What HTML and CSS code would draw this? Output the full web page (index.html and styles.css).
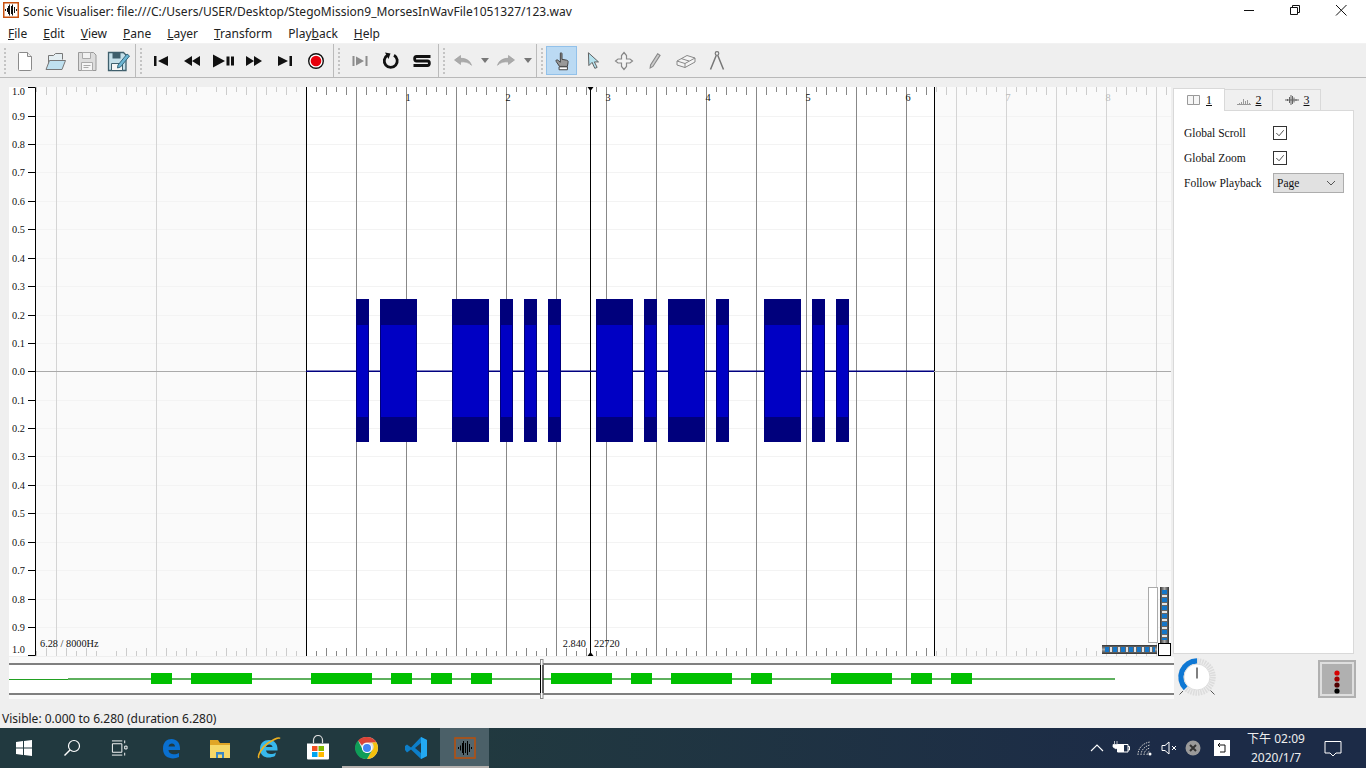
FILE: index.html
```html
<!DOCTYPE html>
<html lang="en">
<head>
  <meta charset="UTF-8">
  <title>Sonic Visualiser</title>
  <link rel="stylesheet" href="styles.css">
</head>
<body>
  <!-- title bar -->
  <div class="titlebar">
    <svg class="app-icon" width="16" height="16" viewBox="0 0 16 16"><rect x="0.75" y="0.75" width="14.5" height="14.5" fill="#fff" stroke="#c8500f" stroke-width="1.5"/><path d="M2.500 7v2M4.500 6v4M5.500 4v8M6.500 2.500v11M8.500 4v8M9.500 2.500v11M11.500 5v6M13.500 7v2" stroke="#111" fill="none"/></svg>
    <span class="title-text">Sonic Visualiser: file:///C:/Users/USER/Desktop/StegoMission9_MorsesInWavFile1051327/123.wav</span>
    <div class="window-controls">
      <svg width="46" height="22" viewBox="0 0 46 22"><path d="M18 10.500h10" stroke="#111"/></svg>
      <svg width="46" height="22" viewBox="0 0 46 22"><path d="M18.500 7.500h7v7h-7zM20.500 7.500v-2h7v7h-2" fill="none" stroke="#111"/></svg>
      <svg width="46" height="22" viewBox="0 0 46 22"><path d="M18 5l10.500 10.500M28.500 5L18 15.500" stroke="#111"/></svg>
    </div>
  </div>

  <!-- menu -->
  <div class="menubar">
    <span class="menu-item"><u>F</u>ile</span>
    <span class="menu-item"><u>E</u>dit</span>
    <span class="menu-item"><u>V</u>iew</span>
    <span class="menu-item"><u>P</u>ane</span>
    <span class="menu-item"><u>L</u>ayer</span>
    <span class="menu-item"><u>T</u>ransform</span>
    <span class="menu-item">Play<u>b</u>ack</span>
    <span class="menu-item"><u>H</u>elp</span>
  </div>

  <!-- toolbars -->
  <div class="toolbar">
    <div class="tool-group file-group">
      <span class="grip"></span>
      <span class="tool"><svg width="24" height="24" viewBox="0 0 24 24"><path d="M6.500 3.500h8l4 4v13a1 1 0 0 1-1 1h-11a1 1 0 0 1-1-1v-16a1 1 0 0 1 1-1z" fill="#fff" stroke="#8a8a8a"/><path d="M14.500 3.500v4h4" fill="#eee" stroke="#8a8a8a"/></svg></span>
      <span class="tool"><svg width="24" height="24" viewBox="0 0 24 24"><path d="M4.500 20V6.500h5l2-2h7v6" fill="#e4eef2" stroke="#777"/><path d="M2 20.500l3.500-9h16l-3.500 9z" fill="#bfe0ef" stroke="#777"/></svg></span>
      <span class="tool"><svg width="24" height="24" viewBox="0 0 24 24"><path d="M3.500 3.500h15l2.500 2.500v15.500h-17.500z" fill="#ddd" stroke="#999"/><path d="M7.500 3.500h8v6h-8z" fill="#f2f2f2" stroke="#aaa"/><path d="M6.500 13.500h11v8h-11z" fill="#f6f6f6" stroke="#aaa"/><path d="M8.500 16.500h7M8.500 18.500h5" stroke="#aaa"/></svg></span>
      <span class="tool"><svg width="24" height="24" viewBox="0 0 24 24"><path d="M2.500 3.500h15l2.500 2.500v15.500h-17.500z" fill="#c5e0ea" stroke="#3f5f6c" stroke-width="1.300"/><path d="M6.500 3.500h8v6h-8z" fill="#3f5f6c"/><path d="M5.500 14.500h11v7h-11z" fill="#f6f6f6" stroke="#3f5f6c"/><path d="M12 16l9-11 2.500 2-9 11-3 1z" fill="#6db6d4" stroke="#35677c"/></svg></span>
    </div>
    <div class="tool-group transport-group">
      <span class="grip"></span>
      <span class="tool"><svg width="24" height="24" viewBox="0 0 24 24"><path d="M5 7h2.500v10H5zM19 7v10l-10-5z" fill="#111"/></svg></span>
      <span class="tool"><svg width="24" height="24" viewBox="0 0 24 24"><path d="M12 7v10l-8-5zM20 7v10l-8-5z" fill="#111"/></svg></span>
      <span class="tool"><svg width="24" height="24" viewBox="0 0 24 24"><path d="M2 5.500v13l12-6.500zM15.500 7.500h3v9h-3zM20 7.500h3v9h-3z" fill="#111"/></svg></span>
      <span class="tool"><svg width="24" height="24" viewBox="0 0 24 24"><path d="M4 7v10l8-5zM12 7v10l8-5z" fill="#111"/></svg></span>
      <span class="tool"><svg width="24" height="24" viewBox="0 0 24 24"><path d="M5 7v10l10-5zM16.500 7H19v10h-2.500z" fill="#111"/></svg></span>
      <span class="tool"><svg width="24" height="24" viewBox="0 0 24 24"><circle cx="12" cy="12" r="7.300" fill="#fff" stroke="#111" stroke-width="1.400"/><circle cx="12" cy="12" r="5.300" fill="#e8000c"/></svg></span>
    </div>
    <div class="tool-group loop-group">
      <span class="grip"></span>
      <span class="tool"><svg width="24" height="24" viewBox="0 0 24 24"><path d="M4.500 7h2v10h-2zM17.500 7h2v10h-2zM8 7.500v9l8-4.500z" fill="#8c8c8c"/></svg></span>
      <span class="tool"><svg width="24" height="24" viewBox="0 0 24 24"><path d="M15 6.300a6.500 6.500 0 1 1-6.500 0" fill="none" stroke="#111" stroke-width="2.800"/><path d="M6 3.500l5.500 1-2 5.500z" fill="#111"/></svg></span>
      <span class="tool"><svg width="24" height="24" viewBox="0 0 24 24"><path d="M20.500 7.500H6.500c-2.500 0-2.500 4.500 0 4.500h11c2.500 0 2.500 4.500 0 4.500H3.500" fill="none" stroke="#111" stroke-width="2.800"/></svg></span>
    </div>
    <div class="tool-group history-group">
      <span class="grip"></span>
      <span class="tool tool-wide"><svg width="24" height="24" viewBox="0 0 24 24"><path d="M3.500 11l6-4.500v2.800c5 0 9 1.500 11 7-3-3-6.500-3.800-11-3.300v2.500z" fill="#aaa" stroke="#999" stroke-width="0.600"/></svg></span>
      <span class="tool tool-arrow"><svg width="10" height="6" viewBox="0 0 10 6"><path d="M1 0h8l-4 5z" fill="#777"/></svg></span>
      <span class="tool tool-wide"><svg width="24" height="24" viewBox="0 0 24 24"><path d="M20.500 11l-6-4.500v2.800c-5 0-9 1.500-11 7 3-3 6.500-3.800 11-3.300v2.500z" fill="#aaa" stroke="#999" stroke-width="0.600"/></svg></span>
      <span class="tool tool-arrow"><svg width="10" height="6" viewBox="0 0 10 6"><path d="M1 0h8l-4 5z" fill="#777"/></svg></span>
    </div>
    <div class="tool-group mode-group">
      <span class="grip"></span>
      <span class="tool tool-active"><svg width="20" height="20" viewBox="0 0 24 24"><path d="M10 2.500c1-.800 2-.300 2 1V10l5.500 1c1.500.300 2 1 1.800 2.500l-.8 5H9l-4-6c-.800-1.500.8-2.500 2-1.500l3 2.500z" fill="#999" stroke="#444" stroke-width="1.200"/><path d="M8.500 19h10v3.500h-10z" fill="#fff" stroke="#444" stroke-width="1.200"/></svg></span>
      <span class="tool"><svg width="22" height="22" viewBox="0 0 24 24"><path d="M7 3l.500 14 3.500-3.500 3 6.500 2.500-1-3-6h4.500z" fill="#b5e2ee" stroke="#555"/></svg></span>
      <span class="tool"><svg width="24" height="24" viewBox="0 0 24 24"><path d="M12 3.500l2.500 3v3.500h3.500l2.500 2-2.500 2H14.500v3.500l-2.500 3-2.500-3V14H6l-2.500-2L6 10h3.500V6.500z" fill="#f3f3f3" stroke="#888" stroke-width="1.200"/></svg></span>
      <span class="tool"><svg width="19" height="19" viewBox="0 0 24 24"><path d="M16 3.500l3 2-9 14-3.500 2 .500-4z" fill="#ccc" stroke="#888" stroke-width="1.400"/></svg></span>
      <span class="tool"><svg width="24" height="24" viewBox="0 0 24 24"><path d="M3 12l10-5.500 8 2.500v4l-10 5.500-8-2.500z" fill="#f4f4f4" stroke="#888"/><path d="M3 12l8 2.500 10-5.500M11 14.500v4M7 9.500l8 2.500" fill="none" stroke="#888"/></svg></span>
      <span class="tool"><svg width="24" height="24" viewBox="0 0 24 24"><circle cx="12" cy="4.500" r="1.800" fill="none" stroke="#777" stroke-width="1.200"/><path d="M11.200 6.500L5.500 20.500M12.800 6.500l5.700 14" stroke="#777" stroke-width="1.500"/></svg></span>
    </div>
  </div>

  <!-- main area: pane and property box -->
  <div class="main-row">
    <svg class="pane" width="1162" height="569" viewBox="9 87 1162 569">
      <defs>
        <pattern id="ticks-in" patternUnits="userSpaceOnUse" x="306" y="87" width="100" height="8"><path d="M10.500 0v5M20.500 0v8M30.500 0v5M40.500 0v8M60.500 0v8M70.500 0v5M80.500 0v8M90.500 0v5" stroke="#888"/></pattern>
        <pattern id="ticks-out" patternUnits="userSpaceOnUse" x="306" y="87" width="100" height="8"><path d="M10.500 0v5M20.500 0v8M30.500 0v5M40.500 0v8M60.500 0v8M70.500 0v5M80.500 0v8M90.500 0v5" stroke="#ccc"/></pattern>
        <g id="ruler-ticks">
          <rect x="36" y="87" width="270" height="8" fill="url(#ticks-out)"/>
          <rect x="306" y="87" width="628" height="8" fill="url(#ticks-in)"/>
          <rect x="934" y="87" width="237" height="8" fill="url(#ticks-out)"/>
        </g>
        <pattern id="wheel-v" patternUnits="userSpaceOnUse" x="1160" y="590" width="9" height="8"><rect x="2" y="0" width="5" height="4" fill="#1576c8"/><rect x="2" y="4" width="5" height="1" fill="#666"/><rect x="2" y="5" width="5" height="2" fill="#e4e4e4"/><rect x="2" y="7" width="5" height="1" fill="#666"/></pattern>
        <pattern id="wheel-h" patternUnits="userSpaceOnUse" x="1105" y="645" width="8" height="9"><rect x="0" y="2" width="4" height="5" fill="#1576c8"/><rect x="4" y="2" width="1" height="5" fill="#666"/><rect x="5" y="2" width="2" height="5" fill="#e4e4e4"/><rect x="7" y="2" width="1" height="5" fill="#666"/></pattern>
        <linearGradient id="wheel-edge-v"><stop offset="0" stop-color="#333"/><stop offset="0.500" stop-color="#aaa"/><stop offset="1" stop-color="#333"/></linearGradient>
        <linearGradient id="wheel-edge-h" x2="0" y2="1"><stop offset="0" stop-color="#333"/><stop offset="0.500" stop-color="#aaa"/><stop offset="1" stop-color="#333"/></linearGradient>
      </defs>

      <rect x="9" y="87" width="27" height="569" fill="#fff"/>
      <rect x="36" y="87" width="1135" height="569" fill="#fafafa"/>
      <rect x="306" y="87" width="628" height="569" fill="#fff"/>

      <!-- grid -->
      <path d="M36 116.500H1171M36 144.500H1171M36 172.500H1171M36 201.500H1171M36 229.500H1171M36 258.500H1171M36 286.500H1171M36 315.500H1171M36 343.500H1171M36 400.500H1171M36 428.500H1171M36 456.500H1171M36 485.500H1171M36 513.500H1171M36 542.500H1171M36 570.500H1171M36 599.500H1171M36 627.500H1171" stroke="#f3f3f3" fill="none"/>
      <path d="M56.500 87V656M156.500 87V656M256.500 87V656M956.500 87V656M1006.500 87V656M1056.500 87V656M1106.500 87V656M1156.500 87V656" stroke="#d4d4d4" fill="none"/>
      <path d="M356.500 87V656M406.500 87V656M456.500 87V656M506.500 87V656M556.500 87V656M606.500 87V656M656.500 87V656M706.500 87V656M756.500 87V656M806.500 87V656M856.500 87V656M906.500 87V656" stroke="#888" fill="none"/>
      <path d="M306.500 87V656M934.500 87V656M590.500 87V656" stroke="#000" fill="none"/>
      <path d="M36 371.500H306M934 371.500H1171" stroke="#aaa" fill="none"/>
      <use href="#ruler-ticks"/>
      <use href="#ruler-ticks" transform="matrix(1 0 0 -1 0 743)"/>
      <path d="M587.500 87h6l-3 4zM587.500 656h6l-3-4z" fill="#000"/>

      <!-- vertical scale -->
      <path d="M28 87.500h7.500V655.500H28M28 116.500h7M28 144.500h7M28 172.500h7M28 201.500h7M28 229.500h7M28 258.500h7M28 286.500h7M28 315.500h7M28 343.500h7M28 371.500h7M28 400.500h7M28 428.500h7M28 456.500h7M28 485.500h7M28 513.500h7M28 542.500h7M28 570.500h7M28 599.500h7M28 627.500h7" stroke="#000" fill="none"/>
      <g class="scale-text">
        <text x="12" y="95">1.0</text><text x="12" y="120">0.9</text><text x="12" y="148">0.8</text><text x="12" y="176">0.7</text><text x="12" y="205">0.6</text><text x="12" y="233">0.5</text><text x="12" y="262">0.4</text><text x="12" y="290">0.3</text><text x="12" y="319">0.2</text><text x="12" y="347">0.1</text><text x="12" y="375">0.0</text><text x="12" y="404">0.1</text><text x="12" y="432">0.2</text><text x="12" y="460">0.3</text><text x="12" y="489">0.4</text><text x="12" y="517">0.5</text><text x="12" y="546">0.6</text><text x="12" y="574">0.7</text><text x="12" y="603">0.8</text><text x="12" y="631">0.9</text><text x="12" y="653">1.0</text>
      </g>

      <!-- ruler labels -->
      <g class="scale-text">
        <text x="405.500" y="101">1</text><text x="505.500" y="101">2</text><text x="605.500" y="101">3</text><text x="705.500" y="101">4</text><text x="805.500" y="101">5</text><text x="905.500" y="101">6</text>
      </g>
      <g class="scale-text scale-faint"><text x="1005.500" y="101">7</text><text x="1105.500" y="101">8</text></g>

      <!-- waveform -->
      <rect x="306" y="370.500" width="628" height="1.500" fill="#000080"/>
      <path d="M356 299h13v143h-13zM380 299h37v143h-37zM452 299h37v143h-37zM500 299h13v143h-13zM524 299h13v143h-13zM548 299h13v143h-13zM596 299h37v143h-37zM644 299h13v143h-13zM668 299h37v143h-37zM716 299h13v143h-13zM764 299h37v143h-37zM812 299h13v143h-13zM836 299h13v143h-13z" fill="#00007c"/>
      <path d="M357 325h11v92h-11zM381 325h35v92h-35zM453 325h35v92h-35zM501 325h11v92h-11zM525 325h11v92h-11zM549 325h11v92h-11zM597 325h35v92h-35zM645 325h11v92h-11zM669 325h35v92h-35zM717 325h11v92h-11zM765 325h35v92h-35zM813 325h11v92h-11zM837 325h11v92h-11z" fill="#0000c4"/>

      <g class="scale-text">
        <text x="40" y="647">6.28 / 8000Hz</text>
        <text x="586" y="647" text-anchor="end">2.840</text>
        <text x="594" y="647">22720</text>
      </g>

      <!-- zoom thumbwheels -->
      <rect x="1148.500" y="587.500" width="9" height="55" fill="#fff" stroke="#aaa"/>
      <rect x="1160" y="587" width="9" height="56" fill="url(#wheel-edge-v)"/>
      <rect x="1160" y="590" width="9" height="50" fill="url(#wheel-v)"/>
      <rect x="1102" y="645" width="55" height="9" fill="url(#wheel-edge-h)"/>
      <rect x="1105" y="645" width="50" height="9" fill="url(#wheel-h)"/>
      <rect x="1158.500" y="643.500" width="12" height="12" fill="#fff" stroke="#000"/>
    </svg>

    <div class="property-box">
      <div class="tabs">
        <div class="tab tab-current"><svg width="16" height="12" viewBox="0 0 16 12"><path d="M1.500 1.500h6v9h-6zM7.500 1.500h6v9h-6z" fill="#f6f6f6" stroke="#999"/></svg><u>1</u></div>
        <div class="tab"><svg width="16" height="12" viewBox="0 0 16 12"><path d="M1 10.500h14M3.500 10V9M5.500 10V8M7.500 10V5M9.500 10V7M11.500 10V6M13.500 10V9" stroke="#999" fill="none"/></svg><u>2</u></div>
        <div class="tab"><svg width="16" height="12" viewBox="0 0 16 12"><path d="M1 6h14M3.500 5v2M5.500 3v6M7 1v10M8.500 2v8M10 3.500v5M12 5v2" stroke="#666" fill="none"/></svg><u>3</u></div>
      </div>
      <div class="tab-body">
        <div class="prop-label">Global Scroll</div>
        <div class="checkbox"><svg width="12" height="12" viewBox="0 0 13 13"><path d="M2.500 6.500l3 3 5-6" fill="none" stroke="#444"/></svg></div>
        <div class="prop-label">Global Zoom</div>
        <div class="checkbox"><svg width="12" height="12" viewBox="0 0 13 13"><path d="M2.500 6.500l3 3 5-6" fill="none" stroke="#444"/></svg></div>
        <div class="prop-label">Follow Playback</div>
        <div class="combo"><span>Page</span><svg width="10" height="6" viewBox="0 0 10 6"><path d="M1 1l4 4 4-4" fill="none" stroke="#555"/></svg></div>
      </div>
    </div>
  </div>

  <!-- overview, dial, level button -->
  <div class="overview-row">
    <svg class="overview" width="1165" height="42" viewBox="9 657 1165 42">
      <rect x="9" y="657" width="1165" height="42" fill="#fafafa"/>
      <rect x="9" y="665" width="1165" height="28" fill="#fff"/>
      <path d="M9 664h1165M9 694h1165" stroke="#808080" stroke-width="2"/>
      <path d="M9 679.500h59" stroke="#22a022"/>
      <path d="M68 679h1047" stroke="#5eb05e" stroke-width="2"/>
      <path d="M151 673h21v11h-21zM191 673h61v11h-61zM311 673h61v11h-61zM391 673h21v11h-21zM431 673h21v11h-21zM471 673h21v11h-21zM551 673h61v11h-61zM631 673h21v11h-21zM671 673h61v11h-61zM751 673h21v11h-21zM831 673h61v11h-61zM911 673h21v11h-21zM951 673h21v11h-21z" fill="#00c000"/>
      <rect x="540.500" y="659.500" width="2.500" height="39" fill="#fff" stroke="#888"/>
      <path d="M540.500 665v28M543 665v28" stroke="#000"/>
    </svg>
    <svg class="dial" width="44" height="42" viewBox="1175 657 44 42">
      <circle cx="1197" cy="677" r="16" fill="none" stroke="#dcdcdc" stroke-width="5.500" stroke-dasharray="1.500 1"/>
      <path d="M1197 661a16 16 0 0 0-11.300 27.300" fill="none" stroke="#0f78d4" stroke-width="5.500"/>
      <circle cx="1197" cy="677" r="13" fill="#fff" stroke="#ddd"/>
      <path d="M1197 667.500v11" stroke="#808080" stroke-width="2"/>
      <path d="M1183 691l-3.500 3.500M1210.500 690.500l4 4" stroke="#555"/>
    </svg>
    <div class="level-button">
      <svg width="30" height="30" viewBox="0 0 30 30"><rect width="30" height="30" fill="#b0b0b0"/><circle cx="15" cy="9" r="2.600" fill="#d80000"/><circle cx="15" cy="15" r="2.600" fill="#a00000"/><circle cx="15" cy="21" r="2.600" fill="#500000"/><circle cx="15" cy="27" r="2.600" fill="#000"/></svg>
    </div>
  </div>

  <div class="statusbar">Visible: 0.000 to 6.280 (duration 6.280)</div>

  <!-- windows taskbar -->
  <div class="taskbar">
    <div class="task-slot task-system"><svg width="18" height="18" viewBox="0 0 18 18"><path d="M1 3l7-1v6.500H1zM9 2l8-1v7.500H9zM1 9.500h7V16l-7-1zM9 9.500h8V17l-8-1z" fill="#fff"/></svg></div>
    <div class="task-slot task-system"><svg width="18" height="18" viewBox="0 0 18 18"><circle cx="11" cy="7" r="5.500" fill="none" stroke="#fff" stroke-width="1.200"/><path d="M7 11l-5.500 5.500" stroke="#fff" stroke-width="1.400"/></svg></div>
    <div class="task-slot task-view"><svg width="17" height="18" viewBox="0 0 18 18"><path d="M1.500 4.500h10v9h-10zM1 1.500h11M1 16.500h11" fill="none" stroke="#fff"/><path d="M14.500 1v3M14.500 7h2.500v3h-2.500zM14.500 14v3" stroke="#fff" fill="none"/></svg></div>
    <div class="task-slot"><svg width="24" height="24" viewBox="0 0 24 24"><path d="M4 12.500C4 6 8 3 12.500 3c5 0 8.500 3.500 8.500 9.500v1.500H9.500c.3 4.500 6.500 5.500 10.500 3v4c-6 3-16 1.500-16-8zM9.500 10.500h6.500c0-4-6-4-6.500 0z" fill="#0a70d0" fill-rule="evenodd"/></svg></div>
    <div class="task-slot"><svg width="24" height="24" viewBox="0 0 24 24"><path d="M2 4h8l2 3h10v15H2z" fill="#e0a526"/><path d="M2 9h20v13H2z" fill="#f6d868"/><path d="M8 16h8v6H8z" fill="#3b87c4"/><path d="M10 18.500h4V22h-4z" fill="#f6d868"/></svg></div>
    <div class="task-slot"><svg width="26" height="26" viewBox="0 0 26 26"><path d="M4 14c0-6 4-9 9-9 5.500 0 8.500 4 8.500 9v1.500H10c.5 4 6 4.500 10 2l-1 3.500c-6 3-15 2-15-7zM10 12h6.500c0-3.500-6-3.500-6.500 0z" fill="#38b8ec" fill-rule="evenodd"/><path d="M3 23c-2-2 3-11 9-15 6-4 11-6 12-4.500" fill="none" stroke="#eeb120" stroke-width="1.600"/></svg></div>
    <div class="task-slot"><svg width="24" height="26" viewBox="0 0 24 26"><path d="M1 8.500h22v15a1 1 0 0 1-1 1H2a1 1 0 0 1-1-1z" fill="#fff"/><path d="M7.500 8V5a4.500 4.500 0 0 1 9 0v3" fill="none" stroke="#ddd" stroke-width="1.200"/><path d="M6 11h5.500v5H6z" fill="#f25022"/><path d="M12.500 11H18v5h-5.500z" fill="#7fba00"/><path d="M6 17h5.500v5H6z" fill="#00a4ef"/><path d="M12.500 17H18v5h-5.500z" fill="#ffb900"/></svg></div>
    <div class="task-slot task-open"><svg width="24" height="24" viewBox="0 0 24 24"><circle cx="12" cy="12" r="11" fill="#e0e0e0"/><path d="M12 1a11 11 0 0 1 9.500 5.500H12a5.500 5.500 0 0 0-5 3L3 4.500A11 11 0 0 1 12 1z" fill="#db4437"/><path d="M21.500 6.500A11 11 0 0 1 12 23l4.800-8.200a5.500 5.500 0 0 0 0-8.300z" fill="#f4c20d"/><path d="M3 4.500a11 11 0 0 0 9 18.500l4.800-8.200a5.500 5.500 0 0 1-9.800-2.300z" fill="#0f9d58"/><circle cx="12" cy="12" r="5" fill="#fff"/><circle cx="12" cy="12" r="4" fill="#4285f4"/></svg></div>
    <div class="task-slot task-open"><svg width="24" height="24" viewBox="0 0 24 24"><path d="M17 1l6 3v16l-6 3-10-9.500-4 3L1 14v-4l2-1.500 4 3z" fill="#0d7fc9"/><path d="M17 1l6 3v16l-6 3z" fill="#23a9f2"/><path d="M17 7l-6 5 6 5z" fill="#1f3a47"/></svg></div>
    <div class="task-slot task-open task-active"><svg width="22" height="22" viewBox="0 0 22 22"><rect x="1" y="1" width="20" height="20" fill="#55666d" stroke="#b5500f" stroke-width="1.600"/><path d="M4.500 10v2M6.500 8.500v5M8.500 6v10M9.500 4v14M11.500 6v10M13.500 4v14M15.500 7v8M17.500 10v2" stroke="#000"/></svg></div>

    <div class="tray">
      <div class="tray-slot"><svg width="14" height="8" viewBox="0 0 14 8"><path d="M1 7l6-6 6 6" fill="none" stroke="#fff" stroke-width="1.100"/></svg></div>
      <div class="tray-slot"><svg width="18" height="14" viewBox="0 0 18 14"><path d="M5.500 3.500h10.500v7.500H5.500zM16 5.500h1.500v3.500H16" fill="none" stroke="#fff"/><path d="M6 4h6v7H6z" fill="#fff"/><path d="M2.500 0v3M5 0v3M1 3.500h5.500V6L4 8 1 6z" fill="#fff" stroke="#fff" stroke-width="0.700"/></svg></div>
      <div class="tray-slot"><svg width="16" height="15" viewBox="0 0 16 15"><path d="M1 14c0-7 5-12 12-13M4 14c0-5 4-9 9-10M7 14c0-3 2-6 6-7M10 14c0-2 1-3 3-4" fill="none" stroke="#ccc" stroke-dasharray="1.500 1"/><circle cx="13" cy="13" r="1.500" fill="#fff"/></svg></div>
      <div class="tray-slot"><svg width="16" height="14" viewBox="0 0 16 14"><path d="M1 4.500h3L8 1v12L4 9.500H1z" fill="none" stroke="#fff"/><path d="M11 5l4 4M15 5l-4 4" stroke="#fff"/></svg></div>
      <div class="tray-slot"><svg width="16" height="16" viewBox="0 0 16 16"><circle cx="8" cy="8" r="7.500" fill="#9a9a9a"/><path d="M5 5l6 6M11 5l-6 6" stroke="#333" stroke-width="2"/></svg></div>
      <div class="tray-slot tray-flag"><svg width="16" height="16" viewBox="0 0 16 16"><rect width="16" height="16" fill="#fff"/><path d="M4 5h7v7H6M4 5l2-2M4 5l2 2" fill="none" stroke="#111"/></svg></div>
      <div class="clock"><div>下午 02:09</div><div>2020/1/7</div></div>
      <div class="tray-action"><svg width="18" height="17" viewBox="0 0 18 17"><path d="M1 1.500h16v11.500h-5l-3 3-3-3H1z" fill="none" stroke="#fff"/></svg></div>
    </div>
  </div>
</body>
</html>
```

FILE: styles.css
```css
body {
  margin: 0;
  width: 1366px;
  height: 768px;
  overflow: hidden;
  background-color: #efefef;
  font-family: "Noto Sans", sans-serif;
  font-size: 12px;
  color: #111;
  display: flex;
  flex-direction: column;
}

svg {
  display: block;
  flex: none;
}

/* title + menu */
.titlebar {
  height: 22px;
  background-color: #fff;
  display: flex;
  align-items: center;
  padding-left: 3px;
}

.app-icon {
  margin-right: 4px;
  margin-top: -2px;
}

.title-text {
  font-size: 12px;
  letter-spacing: 0.03px;
  color: #222;
}

.window-controls {
  margin-left: auto;
  display: flex;
  padding-right: 2px;
}

.menubar {
  height: 20px;
  padding-top: 1px;
  background-color: #fff;
  border-bottom: 1px solid #f2f2f2;
  display: flex;
  align-items: center;
}

.menu-item {
  padding: 0 8px;
  color: #222;
}

/* toolbar */
.toolbar {
  height: 33px;
  border-bottom: 1px solid #b9b9b9;
  display: flex;
}

.tool-group {
  display: flex;
  align-items: center;
  padding-left: 4px;
  border-right: 1px solid #bbb;
  box-sizing: border-box;
}

.file-group { width: 136px; }
.transport-group { width: 198px; }
.loop-group { width: 105px; }
.history-group { width: 98px; }
.mode-group { border-right: none; }

.grip {
  width: 2px;
  height: 26px;
  margin-right: 3px;
  border-left: 2px dotted #c4c4c4;
  box-sizing: border-box;
}

.loop-group .grip,
.history-group .grip { margin-right: 4px; }

.tool {
  width: 31px;
  height: 29px;
  display: flex;
  align-items: center;
  justify-content: center;
  box-sizing: border-box;
}

.tool-wide { width: 28px; }
.tool-arrow { width: 15px; }

.tool-active {
  background-color: #bbdaf3;
  border: 1px solid #92c1ea;
}

/* main row */
.main-row {
  height: 569px;
  margin-top: 9px;
  padding-left: 9px;
  display: flex;
}

.scale-text {
  font-family: "Liberation Serif", serif;
  font-size: 10.3px;
  fill: #111;
}

.scale-faint {
  fill: #bbb;
}

.property-box {
  width: 181px;
  margin-left: 2px;
  display: flex;
  flex-direction: column;
  font-family: "Liberation Serif", serif;
  font-size: 11.5px;
}

.tabs {
  display: flex;
  height: 23px;
  align-items: flex-end;
}

.tab {
  width: 49px;
  height: 21px;
  background-color: #f0f0f0;
  border: 1px solid #d9d9d9;
  border-bottom: none;
  margin-left: -1px;
  box-sizing: border-box;
  display: flex;
  align-items: center;
  justify-content: center;
  gap: 4px;
  font-size: 12px;
}

.tab-current {
  width: 52px;
  height: 23px;
  margin-left: 0;
  background-color: #fff;
  margin-bottom: -1px;
  position: relative;
}

.tab-body {
  flex: 1;
  margin-bottom: 2px;
  background-color: #fff;
  border: 1px solid #d9d9d9;
  box-sizing: border-box;
  padding: 9px 0 0 10px;
  display: grid;
  grid-template-columns: 89px 71px;
  grid-auto-rows: 25px;
  align-items: center;
}

.prop-label {
  padding-top: 1px;
}

.checkbox {
  width: 14px;
  height: 14px;
  box-sizing: border-box;
  border: 1px solid #333;
  background-color: #fff;
}

.combo {
  height: 20px;
  background-color: #e1e1e1;
  border: 1px solid #adadad;
  box-sizing: border-box;
  display: flex;
  align-items: center;
  justify-content: space-between;
  padding: 0 7px 0 3px;
}

/* overview row */
.overview-row {
  height: 42px;
  margin-top: 1px;
  padding-left: 9px;
  display: flex;
}

.dial {
  margin-left: 1px;
}

.level-button {
  width: 38px;
  height: 38px;
  margin: 3px 0 0 99px;
  padding: 2px;
  background-color: #dedede;
  border: 2px solid #b0b0b0;
  box-sizing: border-box;
}

.level-button svg {
  width: 30px;
  height: 30px;
}

.statusbar {
  height: 29px;
  line-height: 39px;
  padding-left: 2px;
  color: #222;
}

/* taskbar */
.taskbar {
  height: 40px;
  background: linear-gradient(90deg, #21393f 0%, #21393f 35%, #1c2b47 85%);
  display: flex;
  color: #fff;
}

.task-slot {
  width: 49px;
  height: 40px;
  display: flex;
  align-items: center;
  justify-content: center;
  box-sizing: border-box;
}

.task-system {
  width: 48px;
}

.task-view {
  width: 46px;
  margin-right: 4px;
}

.task-open {
  border-bottom: 2px solid #b5b1ae;
  padding-top: 2px;
}

.task-active {
  background-color: #4b6068;
}

.tray {
  margin-left: auto;
  padding-right: 13px;
  display: flex;
  align-items: center;
}

.tray-slot {
  width: 24px;
  display: flex;
  justify-content: center;
}

.tray-flag {
  width: 34px;
}

.clock {
  width: 74px;
  text-align: center;
  line-height: 19px;
  font-family: "Noto Sans", "Noto Sans CJK TC", sans-serif;
  font-size: 12px;
  color: #eee;
}

.tray-action {
  width: 40px;
  display: flex;
  justify-content: center;
}
```
